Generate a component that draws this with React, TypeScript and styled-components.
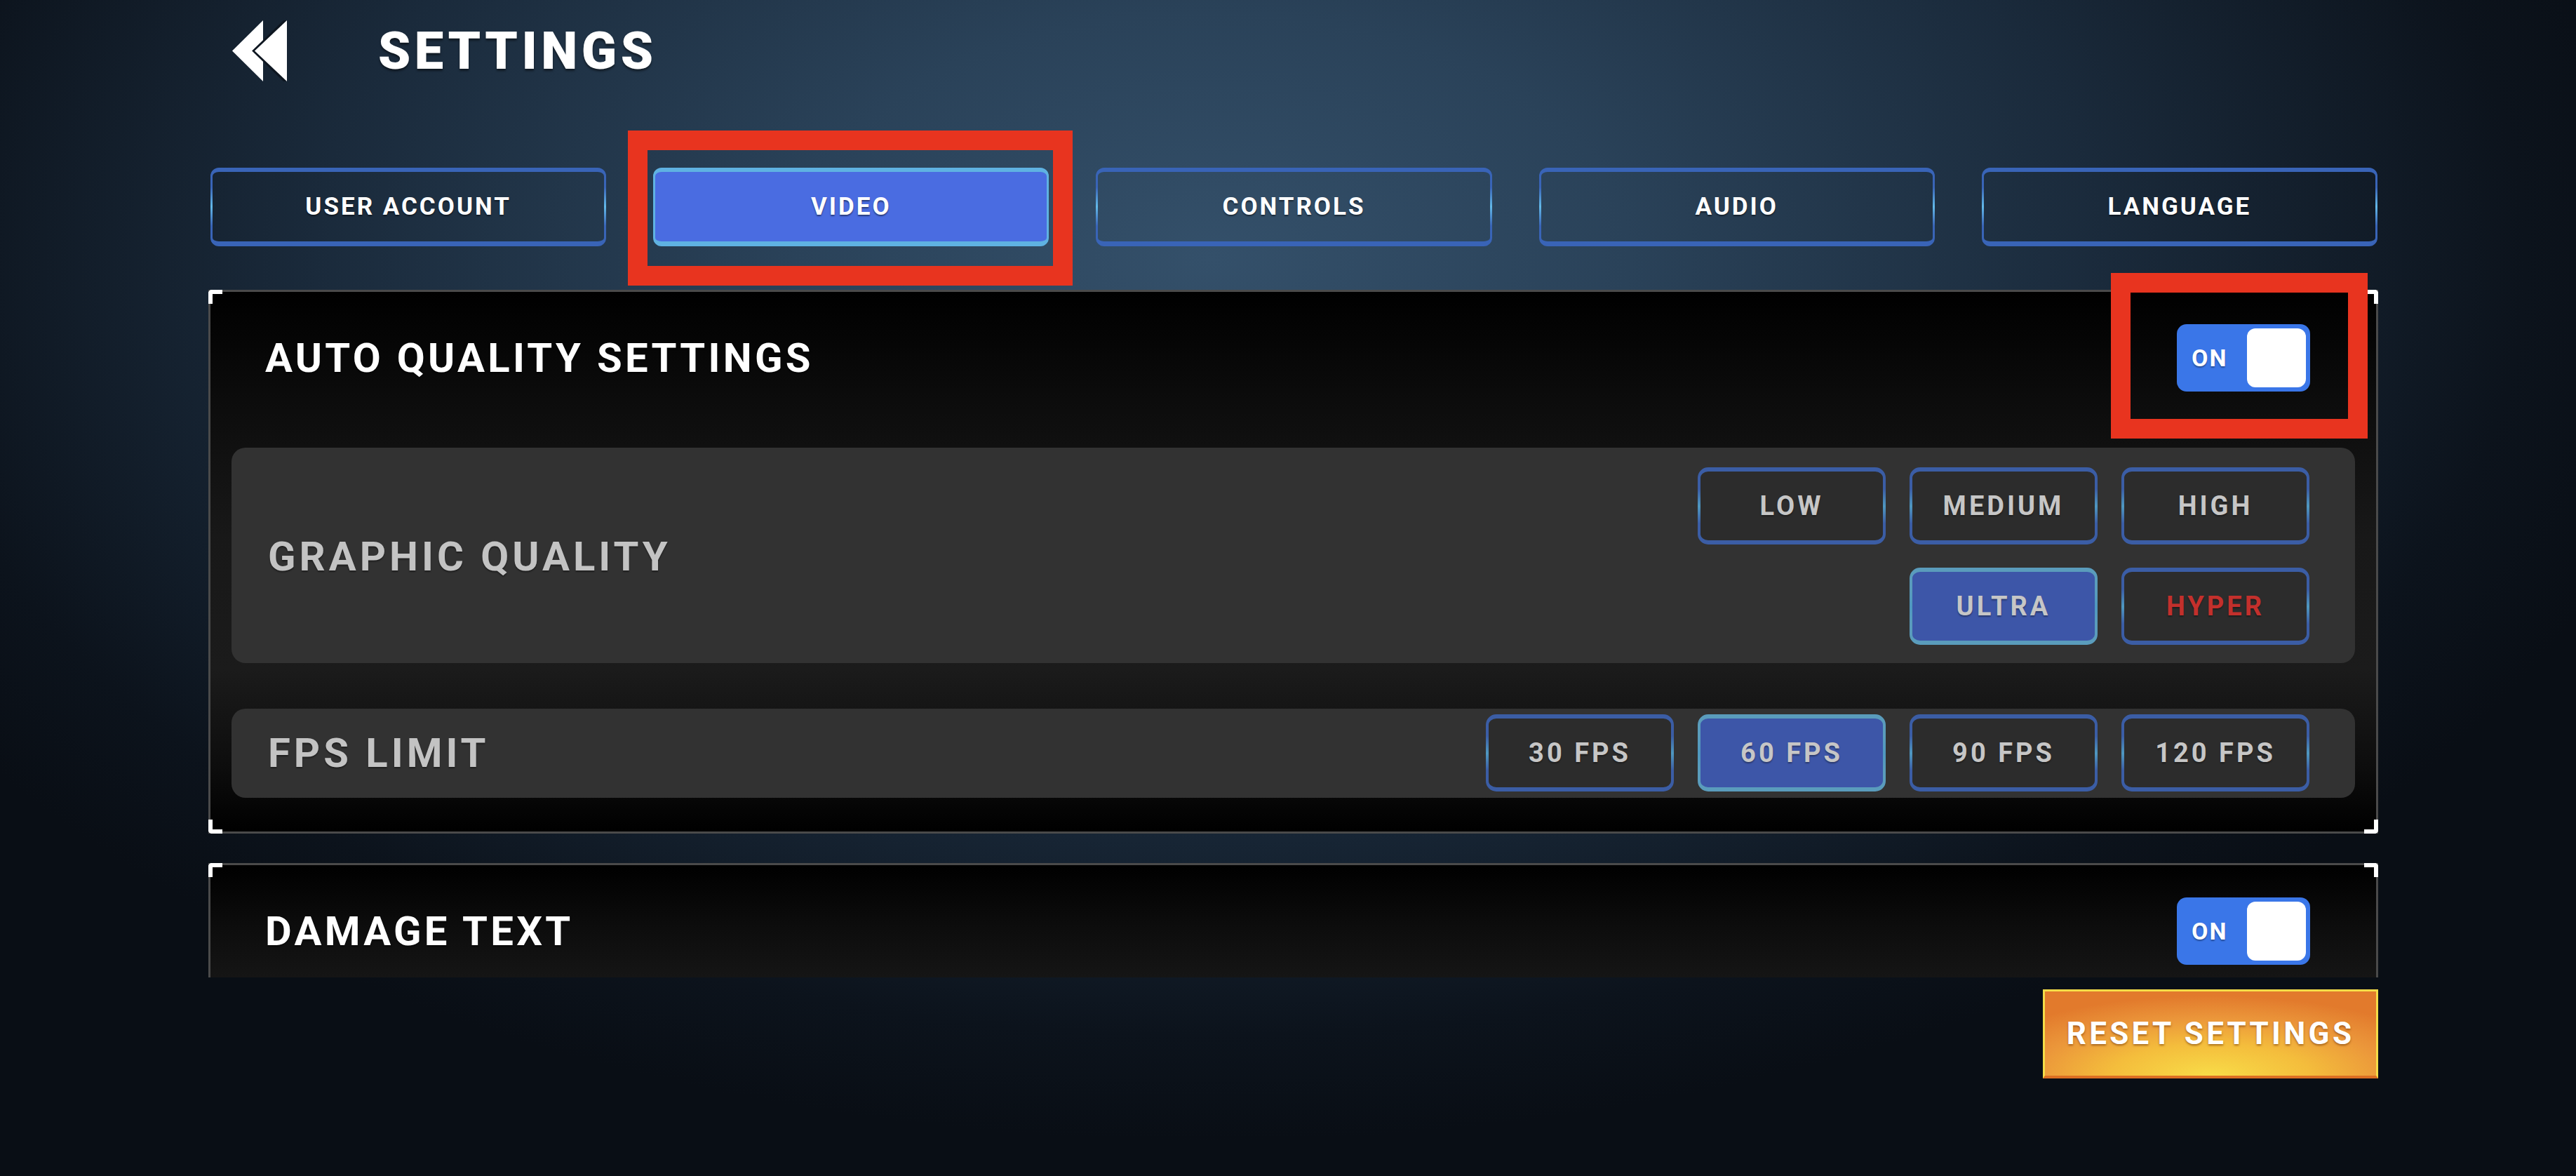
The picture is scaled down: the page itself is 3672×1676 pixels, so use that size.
import React from "react";
import styled, { createGlobalStyle } from "styled-components";

const FONT = `"Roboto", "Liberation Sans", Arial, sans-serif`;

const GlobalStyle = createGlobalStyle`
  html, body { margin: 0; padding: 0; height: 100%; }
  body {
    background: radial-gradient(ellipse 58% 75% at 47% 22%, #34506a 0%, #2a4259 28%, #1a2a3b 60%, #0c131c 88%, #090e15 100%);
    background-color: #0b1119;
    overflow: hidden;
  }
  * { box-sizing: border-box; }
`;

const Page = styled.div`
  min-height: 100vh;
  padding: 29px 282px 0 297px;
  display: flex;
  flex-direction: column;
`;

const Header = styled.header`
  display: flex;
  align-items: center;
  height: 87px;
  padding-left: 34px;
`;

const BackButton = styled.button`
  display: flex;
  padding: 0;
  border: 0;
  background: none;
  cursor: pointer;
`;

const Title = styled.h1`
  margin: 0 0 0 130px;
  font-family: ${FONT};
  font-weight: 900;
  font-size: 74px;
  letter-spacing: 5.5px;
  color: #fff;
  text-shadow: 0 3px 3px rgba(0, 0, 0, 0.45);
  line-height: 1;
`;

const TabsRow = styled.nav`
  margin-top: 123px;
  padding: 0 1px 0 3px;
  display: grid;
  grid-template-columns: repeat(5, 1fr);
  gap: 67px;
`;

const Tab = styled.button<{ $active?: boolean }>`
  position: relative;
  height: 112px;
  border-style: solid;
  border-width: 6px 3px 7px;
  border-color: ${(p) => (p.$active ? "#5fb2e2" : "#3964b7")};
  border-radius: 12px;
  background: ${(p) => (p.$active ? "#4a6ce1" : "transparent")};
  color: #fff;
  font-family: ${FONT};
  font-weight: 700;
  font-size: 35px;
  letter-spacing: 3px;
  text-shadow: 0 2px 2px rgba(0, 0, 0, 0.45);
  cursor: pointer;
  &::before,
  &::after {
    content: "";
    position: absolute;
    top: 22%;
    bottom: 22%;
    width: 3px;
    background: linear-gradient(180deg, transparent, ${(p) => (p.$active ? "#5fb2e2" : "#63b9e8")}, transparent);
  }
  &::before { left: -3px; }
  &::after { right: -3px; }
`;

const Highlight = styled.span<{ $t: number; $r: number; $b: number; $l: number }>`
  position: absolute;
  top: ${(p) => p.$t}px;
  right: ${(p) => p.$r}px;
  bottom: ${(p) => p.$b}px;
  left: ${(p) => p.$l}px;
  border: 28px solid #e8341f;
  pointer-events: none;
  z-index: 5;
`;

const ScrollArea = styled.div`
  margin-top: 62px;
  height: 980px;
  display: flex;
  flex-direction: column;
  gap: 42px;
  clip-path: inset(-200px -200px 0 -200px);
`;

const Panel = styled.section<{ $minHeight?: number }>`
  position: relative;
  flex-shrink: 0;
  border: 3px solid #4a4a4a;
  padding: 46px 30px 48px;
  min-height: ${(p) => (p.$minHeight ? `${p.$minHeight}px` : "auto")};
  background: linear-gradient(180deg, #000 0%, #0c0c0c 20%, #181818 45%, #1b1b1b 70%, #0d0d0d 88%, #000 100%);
  display: flex;
  flex-direction: column;
`;

const Corner = styled.span<{ $v: "top" | "bottom"; $h: "left" | "right" }>`
  position: absolute;
  width: 20px;
  height: 20px;
  ${(p) => p.$v}: -3px;
  ${(p) => p.$h}: -3px;
  border-${(p) => p.$v}: 6px solid #fff;
  border-${(p) => p.$h}: 6px solid #fff;
  border-${(p) => p.$v}-${(p) => p.$h}-radius: 5px;
`;

const PanelHeader = styled.div`
  display: flex;
  align-items: center;
  justify-content: space-between;
  height: 96px;
  padding: 0 64px 0 48px;
`;

const SectionTitle = styled.h2`
  margin: 0;
  font-family: ${FONT};
  font-weight: 700;
  font-size: 58px;
  letter-spacing: 4.3px;
  color: #fff;
  text-shadow: 0 2px 2px rgba(0, 0, 0, 0.5);
`;

const ToggleWrap = styled.div`
  position: relative;
`;

const Toggle = styled.div`
  width: 190px;
  height: 96px;
  border-radius: 14px;
  background: #3a76e8;
  display: flex;
  align-items: center;
  justify-content: space-between;
  padding: 0 6px 0 21px;
`;

const ToggleLabel = styled.span`
  font-family: ${FONT};
  font-weight: 700;
  font-size: 34px;
  letter-spacing: 2px;
  color: #fff;
  text-shadow: 0 2px 2px rgba(0, 0, 0, 0.35);
`;

const Knob = styled.span`
  width: 84px;
  height: 84px;
  border-radius: 12px;
  background: #fff;
`;

const Cards = styled.div`
  margin-top: 80px;
  display: flex;
  flex-direction: column;
  gap: 65px;
`;

const Card = styled.div<{ $pad: string }>`
  display: flex;
  align-items: center;
  justify-content: space-between;
  background: #323232;
  border-radius: 20px;
  padding: ${(p) => p.$pad};
`;

const CardLabel = styled.span`
  font-family: ${FONT};
  font-weight: 700;
  font-size: 58px;
  letter-spacing: 5px;
  color: #c3c3c3;
  text-shadow: 0 2px 2px rgba(0, 0, 0, 0.4);
`;

const OptionGrid = styled.div<{ $cols: number }>`
  display: grid;
  grid-template-columns: repeat(${(p) => p.$cols}, 268px);
  column-gap: 34px;
  row-gap: 33px;
`;

const Option = styled.button<{ $active?: boolean; $danger?: boolean; $col?: number }>`
  position: relative;
  grid-column: ${(p) => (p.$col ? p.$col : "auto")};
  height: 110px;
  border-style: solid;
  border-width: 6px 4px 6px;
  border-color: ${(p) => (p.$active ? "#5a9cbc" : "#3b5da5")};
  border-radius: 15px;
  background: ${(p) => (p.$active ? "#3d56a8" : "#2c2c2c")};
  color: ${(p) => (p.$danger ? "#c3302c" : "#c6c6c6")};
  font-family: ${FONT};
  font-weight: 700;
  font-size: 38px;
  letter-spacing: 4px;
  text-shadow: 0 2px 2px rgba(0, 0, 0, 0.35);
  cursor: pointer;
  &::before,
  &::after {
    content: "";
    position: absolute;
    top: 25%;
    bottom: 25%;
    width: 4px;
    background: linear-gradient(180deg, transparent, #4f98c0, transparent);
  }
  &::before { left: -4px; }
  &::after { right: -4px; }
`;

const ResetButton = styled.button`
  align-self: flex-end;
  margin-top: 17px;
  width: 478px;
  height: 127px;
  border: 3px solid #f3dc48;
  border-bottom: 4px solid #dc6f22;
  background: radial-gradient(ellipse 75% 95% at 50% 100%, #f8dc48 0%, #f4bd3c 40%, #eb963a 72%, #e27a2c 100%);
  color: #fff;
  font-family: ${FONT};
  font-weight: 700;
  font-size: 44px;
  letter-spacing: 4.3px;
  text-shadow: 0 2px 3px rgba(110, 50, 0, 0.55);
  cursor: pointer;
`;

const BackIcon = () => (
  <svg width="78" height="87" viewBox="0 0 78 87">
    <polygon points="0,43.5 44,0 44,87" fill="#fff" />
    <polyline points="78,-2 31,43.5 78,89" fill="none" stroke="#0e1620" strokeWidth="4" />
    <polygon points="32,43.5 78,0 78,87" fill="#fff" />
  </svg>
);

const OnToggle = ({ highlighted }: { highlighted?: boolean }) => (
  <ToggleWrap>
    <Toggle>
      <ToggleLabel>ON</ToggleLabel>
      <Knob />
    </Toggle>
    {highlighted && <Highlight $t={-73} $r={-82} $b={-67} $l={-94} />}
  </ToggleWrap>
);

const Corners = () => (
  <>
    <Corner $v="top" $h="left" />
    <Corner $v="top" $h="right" />
    <Corner $v="bottom" $h="left" />
    <Corner $v="bottom" $h="right" />
  </>
);

const tabs = ["USER ACCOUNT", "VIDEO", "CONTROLS", "AUDIO", "LANGUAGE"];

export default function App() {
  return (
    <>
      <GlobalStyle />
      <Page>
        <Header>
          <BackButton aria-label="Back">
            <BackIcon />
          </BackButton>
          <Title>SETTINGS</Title>
        </Header>

        <TabsRow>
          {tabs.map((t) => (
            <Tab key={t} $active={t === "VIDEO"}>
              {t}
              {t === "VIDEO" && <Highlight $t={-59} $r={-37} $b={-63} $l={-39} />}
            </Tab>
          ))}
        </TabsRow>

        <ScrollArea>
          <Panel>
            <Corners />
            <PanelHeader>
              <SectionTitle>AUTO QUALITY SETTINGS</SectionTitle>
              <OnToggle highlighted />
            </PanelHeader>
            <Cards>
              <Card $pad="28px 65px 26px 52px">
                <CardLabel>GRAPHIC QUALITY</CardLabel>
                <OptionGrid $cols={3}>
                  <Option>LOW</Option>
                  <Option>MEDIUM</Option>
                  <Option>HIGH</Option>
                  <Option $active $col={2}>ULTRA</Option>
                  <Option $danger>HYPER</Option>
                </OptionGrid>
              </Card>
              <Card $pad="8px 65px 9px 52px">
                <CardLabel>FPS LIMIT</CardLabel>
                <OptionGrid $cols={4}>
                  <Option>30 FPS</Option>
                  <Option $active>60 FPS</Option>
                  <Option>90 FPS</Option>
                  <Option>120 FPS</Option>
                </OptionGrid>
              </Card>
            </Cards>
          </Panel>

          <Panel $minHeight={420}>
            <Corners />
            <PanelHeader>
              <SectionTitle>DAMAGE TEXT</SectionTitle>
              <OnToggle />
            </PanelHeader>
          </Panel>
        </ScrollArea>

        <ResetButton>RESET SETTINGS</ResetButton>
      </Page>
    </>
  );
}
